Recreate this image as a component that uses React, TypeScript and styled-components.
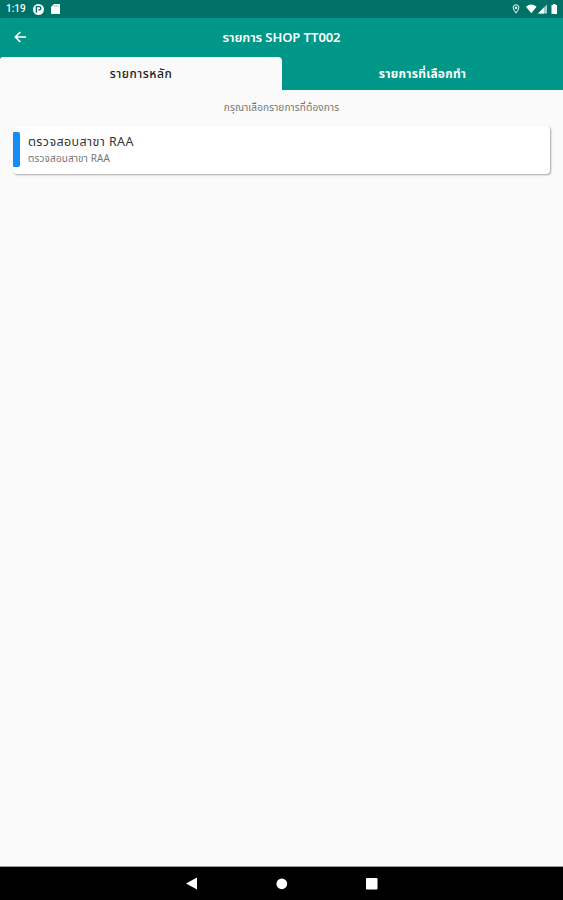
import React from "react";
import styled, { createGlobalStyle } from "styled-components";

const GlobalStyle = createGlobalStyle`
  * { box-sizing: border-box; }
  body { margin: 0; background: #fafafa; font-family: "Noto Sans Thai", Kanit, Prompt, "Noto Sans", sans-serif; }
`;

const Screen = styled.div`
  display: flex;
  flex-direction: column;
  width: 100%;
  height: 900px;
  overflow: hidden;
  background: #fafafa;
`;

const StatusBar = styled.header`
  display: flex;
  align-items: center;
  justify-content: space-between;
  flex: none;
  height: 18px;
  padding: 0 5px 0 6px;
  background: #007166;
  color: #fff;
`;

const StatusGroup = styled.div<{ $gap: number }>`
  display: flex;
  align-items: center;
  gap: ${(p) => p.$gap}px;
`;

const Clock = styled.span`
  width: 20px;
  font: 500 10px/18px Roboto, sans-serif;
  white-space: nowrap;
`;

const TopArea = styled.div`
  flex: none;
  height: 72px;
  background: #009688;
  color: #fff;
`;

const AppBar = styled.div`
  display: grid;
  grid-template-columns: 40px 1fr 40px;
  align-items: center;
  height: 39px;
`;

const BackButton = styled.button`
  display: flex;
  padding: 0 0 1px 13px;
  border: 0;
  background: none;
  color: inherit;
`;

const Title = styled.h1`
  margin: 0;
  text-align: center;
  font-size: 13px;
  line-height: 20px;
  font-weight: 600;
  white-space: nowrap;
  letter-spacing: -0.1px;
`;

const Tabs = styled.div`
  display: grid;
  grid-template-columns: 282px 1fr;
  height: 33px;
`;

const Tab = styled.button<{ $active?: boolean }>`
  padding: 0;
  border: 0;
  border-radius: ${(p) => (p.$active ? "3px 4px 0 0" : "0")};
  background: ${(p) => (p.$active ? "#fafafa" : "transparent")};
  color: ${(p) => (p.$active ? "#222" : "#fff")};
  font-family: inherit;
  font-size: 12px;
  font-weight: ${(p) => (p.$active ? 500 : 700)};
  letter-spacing: ${(p) => (p.$active ? 0.55 : 0.25)}px;
  white-space: nowrap;
`;

const Content = styled.main`
  flex: 1;
  padding: 9px 13px 0;
`;

const Hint = styled.p`
  margin: 0 0 8px;
  text-align: center;
  color: #757575;
  font-size: 10px;
  line-height: 19px;
  letter-spacing: 0.13px;
`;

const Card = styled.article`
  display: flex;
  align-items: center;
  height: 48px;
  border-radius: 4px;
  background: #fff;
  box-shadow: 1px 1px 2px rgba(0, 0, 0, 0.35);
`;

const Accent = styled.div`
  width: 7px;
  height: 35px;
  margin: 0 8px 1px 0;
  border-radius: 1px 2px 2px 1px;
  background: #168cf5;
`;

const CardText = styled.div`
  display: flex;
  flex-direction: column;
  padding-top: 1px;
`;

const CardTitle = styled.span`
  color: #333;
  font-size: 12.5px;
  line-height: 17px;
  letter-spacing: 0.4px;
`;

const CardSubtitle = styled.span`
  color: #757575;
  font-size: 10px;
  line-height: 16px;
  letter-spacing: 0.15px;
`;

const NavBar = styled.footer`
  display: flex;
  align-items: center;
  justify-content: center;
  gap: 78px;
  flex: none;
  height: 33px;
  background: #000;
  box-shadow: 0 -1px 0 #999;
`;

export default function App() {
  return (
    <Screen>
      <GlobalStyle />
      <StatusBar>
        <StatusGroup $gap={7}>
          <Clock>1:19</Clock>
          <svg width="11" height="11" viewBox="0 0 11 11">
            <circle cx="5.5" cy="5.5" r="5.5" fill="#fff" />
            <path d="M3.4 8.8V2.6H6.2A1.6 1.6 0 0 1 6.2 5.9H5.2" fill="none" stroke="#007166" strokeWidth="1.4" />
          </svg>
          <svg width="9" height="10" viewBox="0 0 9 10">
            <path d="M3 0H8.2Q9 0 9 .8V9.2Q9 10 8.2 10H.8Q0 10 0 9.2V3Z" fill="#fff" />
            <path d="M3.3 1.3V3M5.2 1.3V3M7.1 1.3V3" stroke="#007166" strokeOpacity=".55" strokeWidth=".8" />
          </svg>
        </StatusGroup>
        <StatusGroup $gap={0}>
          <svg width="46" height="10" viewBox="0 0 46 10">
            <path d="M4 .8A2.8 2.8 0 0 1 6.8 3.6C6.8 5.7 4 9 4 9S1.2 5.7 1.2 3.6A2.8 2.8 0 0 1 4 .8Z" fill="none" stroke="#d7ebe9" strokeWidth="1.1" />
            <circle cx="4" cy="3.7" r="1.2" fill="#fff" />
            <path d="M14 2.8Q19.3 -1.6 24.6 2.8L19.3 9.3Z" fill="#fff" />
            <path d="M35 .5V9.5H26Z" fill="#a5ceca" />
            <path d="M32 3.5V9.5H26Z" fill="#fff" />
            <path d="M39.5 1H41V0H43.5V1H45V10H39.5Z" fill="#fff" />
          </svg>
        </StatusGroup>
      </StatusBar>
      <TopArea>
        <AppBar>
          <BackButton aria-label="Back">
            <svg width="14" height="14" viewBox="0 0 14 14" fill="none" stroke="#fff" strokeWidth="1.7">
              <path d="M13 7H2.5M7.3 2L2.3 7L7.3 12" />
            </svg>
          </BackButton>
          <Title>รายการ SHOP TT002</Title>
        </AppBar>
        <Tabs>
          <Tab $active>รายการหลัก</Tab>
          <Tab>รายการที่เลือกทำ</Tab>
        </Tabs>
      </TopArea>
      <Content>
        <Hint>กรุณาเลือกรายการที่ต้องการ</Hint>
        <Card>
          <Accent />
          <CardText>
            <CardTitle>ตรวจสอบสาขา RAA</CardTitle>
            <CardSubtitle>ตรวจสอบสาขา RAA</CardSubtitle>
          </CardText>
        </Card>
      </Content>
      <NavBar>
        <svg width="12" height="13" viewBox="0 0 12 13"><path d="M11 .5V12.5L0 6.5Z" fill="#fff" /></svg>
        <svg width="12" height="12" viewBox="0 0 12 12"><circle cx="5.8" cy="5.8" r="5.4" fill="#fff" /></svg>
        <svg width="12" height="12" viewBox="0 0 12 12"><rect width="11.5" height="11.5" rx="1" fill="#fff" /></svg>
      </NavBar>
    </Screen>
  );
}
